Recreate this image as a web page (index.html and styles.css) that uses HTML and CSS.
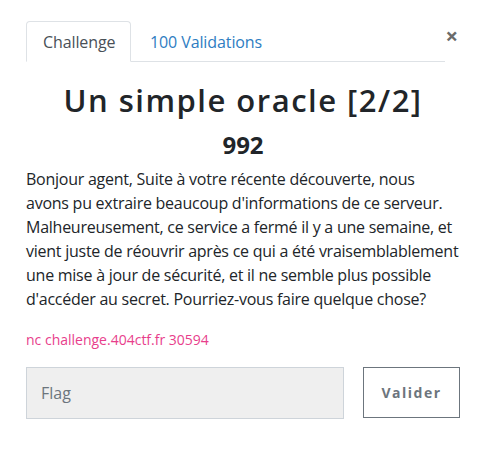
FILE: index.html
```html
<!DOCTYPE html>
<html lang="fr">
<head>
<meta charset="utf-8">
<link rel="stylesheet" href="styles.css">
</head>
<body>
<div class="modal">
  <div class="head">
    <ul class="tabs">
      <li class="tab active">Challenge</li>
      <li class="tab link">100 Validations</li>
    </ul>
    <span class="close">&times;</span>
  </div>
  <h1 class="title">Un simple oracle [2/2]</h1>
  <h2 class="points">992</h2>
  <p class="desc"><span class="line">Bonjour agent, Suite à votre récente découverte, nous</span><span class="line">avons pu extraire beaucoup d'informations de ce serveur.</span><span class="line">Malheureusement, ce service a fermé il y a une semaine, et</span><span class="line">vient juste de réouvrir après ce qui a été vraisemblablement</span><span class="line">une mise à jour de sécurité, et il ne semble plus possible</span><span class="line">d'accéder au secret. Pourriez-vous faire quelque chose?</span></p>
  <code class="cmd">nc challenge.404ctf.fr 30594</code>
  <form class="form">
    <input class="flag" type="text" placeholder="Flag">
    <button class="submit" type="button">Valider</button>
  </form>
</div>
</body>
</html>
```
FILE: styles.css
```css
* { box-sizing: border-box; }
html, body { margin: 0; background: #fff; }
body {
  font-family: "Open Sans", "Noto Sans", sans-serif;
  color: #212529;
}
.modal {
  padding: 21px 25px 0 26px;
}
.head {
  display: flex;
  align-items: flex-start;
}
.tabs {
  list-style: none;
  margin: 0;
  padding: 0;
  display: flex;
  width: 420px;
  border-bottom: 1px solid #dee2e6;
}
.tab {
  height: 41px;
  padding: 0 16px;
  font-size: 16px;
  line-height: 40px;
  margin-bottom: -1px;
  border: 1px solid transparent;
  border-radius: 4px 4px 0 0;
  letter-spacing: -0.1px;
}
.tab.active {
  width: 105px;
  color: #495057;
  border-color: #dee2e6 #dee2e6 #fff;
  background: #fff;
}
.tab.link {
  color: #2e7dc2;
  padding-left: 18px;
}
.close {
  margin-left: auto;
  margin-right: 2px;
  margin-top: 3px;
  font-size: 22px;
  font-weight: 700;
  line-height: 22px;
  color: #6b6b6b;
}
.title {
  margin: 18px 0 0;
  text-align: center;
  font-size: 31px;
  font-weight: 600;
  letter-spacing: 1.5px;
  line-height: 40px;
  color: #212529;
}
.points {
  margin: 9px 0 0;
  text-align: center;
  font-size: 24px;
  font-weight: 700;
  line-height: 32px;
}
.desc {
  margin: 6px 0 0;
  font-size: 16px;
  line-height: 24px;
  color: #212529;
  letter-spacing: -0.25px;
}
.line {
  display: block;
  white-space: nowrap;
}
.cmd {
  display: block;
  margin-top: 19px;
  font-family: inherit;
  font-size: 14px;
  line-height: 20px;
  color: #e83e8c;
}
.form {
  display: flex;
  margin-top: 17px;
  gap: 19px;
  width: 434px;
}
.flag {
  width: 318px;
  height: 52px;
  background: #efefef;
  border: 1px solid #ced4da;
  padding: 0 14px;
  font-family: inherit;
  font-size: 16px;
  color: #495057;
  outline: none;
}
.flag::placeholder { color: #6c757d; }
.submit {
  width: 97px;
  height: 51px;
  background: #fff;
  border: 1px solid #6c757d;
  color: #6c757d;
  font-family: inherit;
  font-size: 14px;
  font-weight: 700;
  letter-spacing: 1.5px;
}
```
